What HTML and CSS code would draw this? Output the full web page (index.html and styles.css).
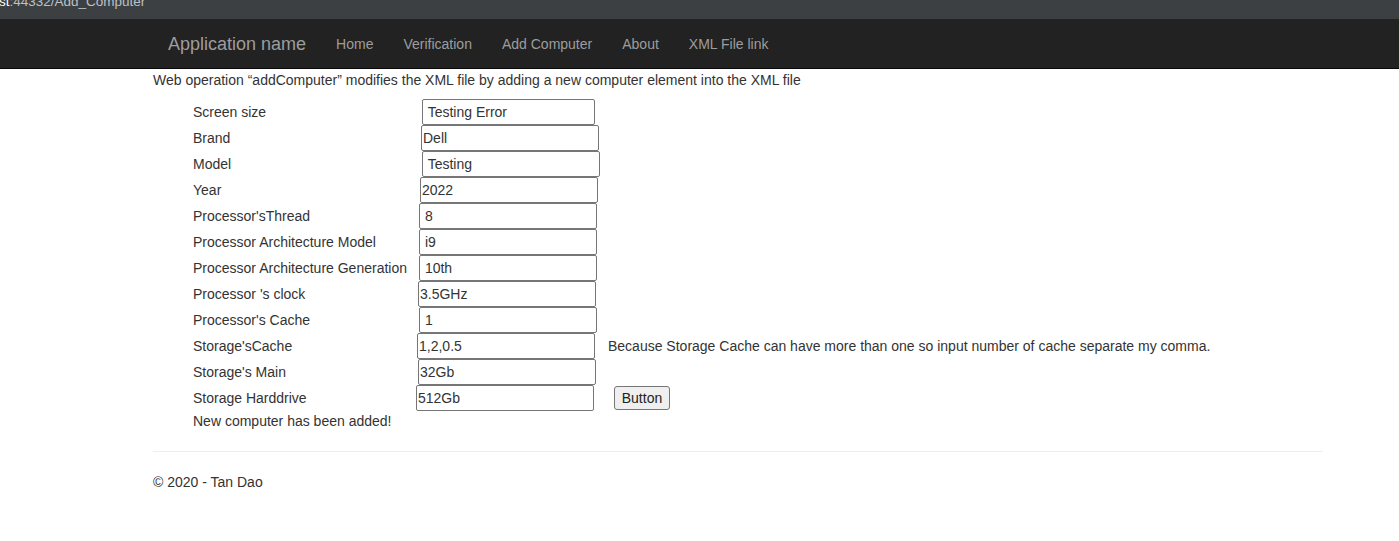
FILE: index.html
```html
<!DOCTYPE html>
<html lang="en">
<head>
<meta charset="utf-8">
<title>Add Computer</title>
<link rel="stylesheet" href="styles.css">
</head>
<body>
<div class="chrome"><div class="url"><span class="host">st</span>:44332/Add_Computer</div></div>
<nav class="navbar">
  <div class="nav-inner">
    <a class="brand" href="#">Application name</a>
    <ul class="nav">
      <li><a href="#">Home</a></li>
      <li><a href="#">Verification</a></li>
      <li><a href="#">Add Computer</a></li>
      <li><a href="#">About</a></li>
      <li><a href="#">XML File link</a></li>
    </ul>
  </div>
</nav>
<main class="container">
  <p class="intro">Web operation “addComputer” modifies the XML file by adding a new computer element into the XML file</p>
  <form class="form">
    <div class="row"><span class="label">Screen size</span><input class="field o6 narrow" type="text" value=" Testing Error"></div>
    <div class="row"><span class="label">Brand</span><input class="field o5" type="text" value="Dell"></div>
    <div class="row"><span class="label">Model</span><input class="field o6" type="text" value=" Testing"></div>
    <div class="row"><span class="label">Year</span><input class="field o4" type="text" value="2022"></div>
    <div class="row"><span class="label">Processor'sThread</span><input class="field o3" type="text" value=" 8"></div>
    <div class="row"><span class="label">Processor Architecture Model</span><input class="field o3" type="text" value=" i9"></div>
    <div class="row"><span class="label">Processor Architecture Generation</span><input class="field o3" type="text" value=" 10th"></div>
    <div class="row"><span class="label">Processor 's clock</span><input class="field o2" type="text" value="3.5GHz"></div>
    <div class="row"><span class="label">Processor's Cache</span><input class="field o3" type="text" value=" 1"></div>
    <div class="row"><span class="label">Storage'sCache</span><input class="field o1" type="text" value="1,2,0.5"><span class="note">Because Storage Cache can have more than one so input number of cache separate my comma.</span></div>
    <div class="row"><span class="label">Storage's Main</span><input class="field o2" type="text" value="32Gb"></div>
    <div class="row"><span class="label">Storage Harddrive</span><input class="field o0" type="text" value="512Gb"><button class="btn" type="button">Button</button></div>
    <div class="status">New computer has been added!</div>
  </form>
  <hr class="rule">
  <footer class="footer"><p>© 2020 - Tan Dao</p></footer>
</main>
</body>
</html>
```
FILE: styles.css
```css
* { box-sizing: border-box; }
html, body { margin: 0; padding: 0; }
body {
  font-family: "Liberation Sans", Arial, Helvetica, sans-serif;
  font-size: 14px;
  line-height: 20px;
  color: #333;
  background: #fff;
}
.chrome {
  height: 19px;
  background: #3c4043;
  overflow: hidden;
}
.url {
  font-size: 13.5px;
  line-height: 14px;
  margin-top: -5px;
  margin-left: -1px;
  color: #bdc1c6;
  white-space: nowrap;
}
.url .host { color: #fff; }
.navbar {
  height: 50px;
  background: #222;
  border-bottom: 1px solid #080808;
}
.nav-inner {
  margin-left: 153px;
  width: 1170px;
  display: flex;
  align-items: center;
  height: 49px;
  padding-top: 2px;
}
.brand {
  padding: 0 15px;
  font-size: 18px;
  line-height: 47px;
  color: #9d9d9d;
  text-decoration: none;
}
.nav {
  list-style: none;
  margin: 0;
  padding: 0;
  display: flex;
}
.nav a {
  display: block;
  padding: 0 15px;
  line-height: 47px;
  color: #9d9d9d;
  text-decoration: none;
}
.container {
  margin-left: 153px;
  width: 1170px;
}
.intro { margin: 1px 0 9px; }
.form { padding-left: 40px; }
.row {
  display: flex;
  align-items: center;
  height: 26px;
}
.label {
  flex: none;
  width: 223px;
  white-space: nowrap;
}
.field {
  flex: none;
  width: 178px;
  height: 26px;
  padding: 1px 1px;
  border: 1px solid #767676;
  border-radius: 2px;
  font: inherit;
  color: #333;
  background: #fff;
  margin: 0;
  white-space: pre;
}
.narrow { width: 173px; }
.o0 { margin-left: 0; }
.o1 { margin-left: 1px; }
.o2 { margin-left: 2px; }
.o3 { margin-left: 3px; }
.o4 { margin-left: 4px; }
.o5 { margin-left: 5px; }
.o6 { margin-left: 6px; }
.note { margin-left: 13px; white-space: nowrap; }
.btn {
  margin-left: 20px;
  height: 24px;
  width: 56px;
  padding: 0;
  font: inherit;
  color: #222;
  background: #efefef;
  border: 1px solid #767676;
  border-radius: 3px;
}
.status { line-height: 20px; }
.rule {
  margin: 20px 0;
  border: 0;
  border-top: 1px solid #eee;
  height: 0;
}
.footer p { margin: 0 0 10px; }
```
